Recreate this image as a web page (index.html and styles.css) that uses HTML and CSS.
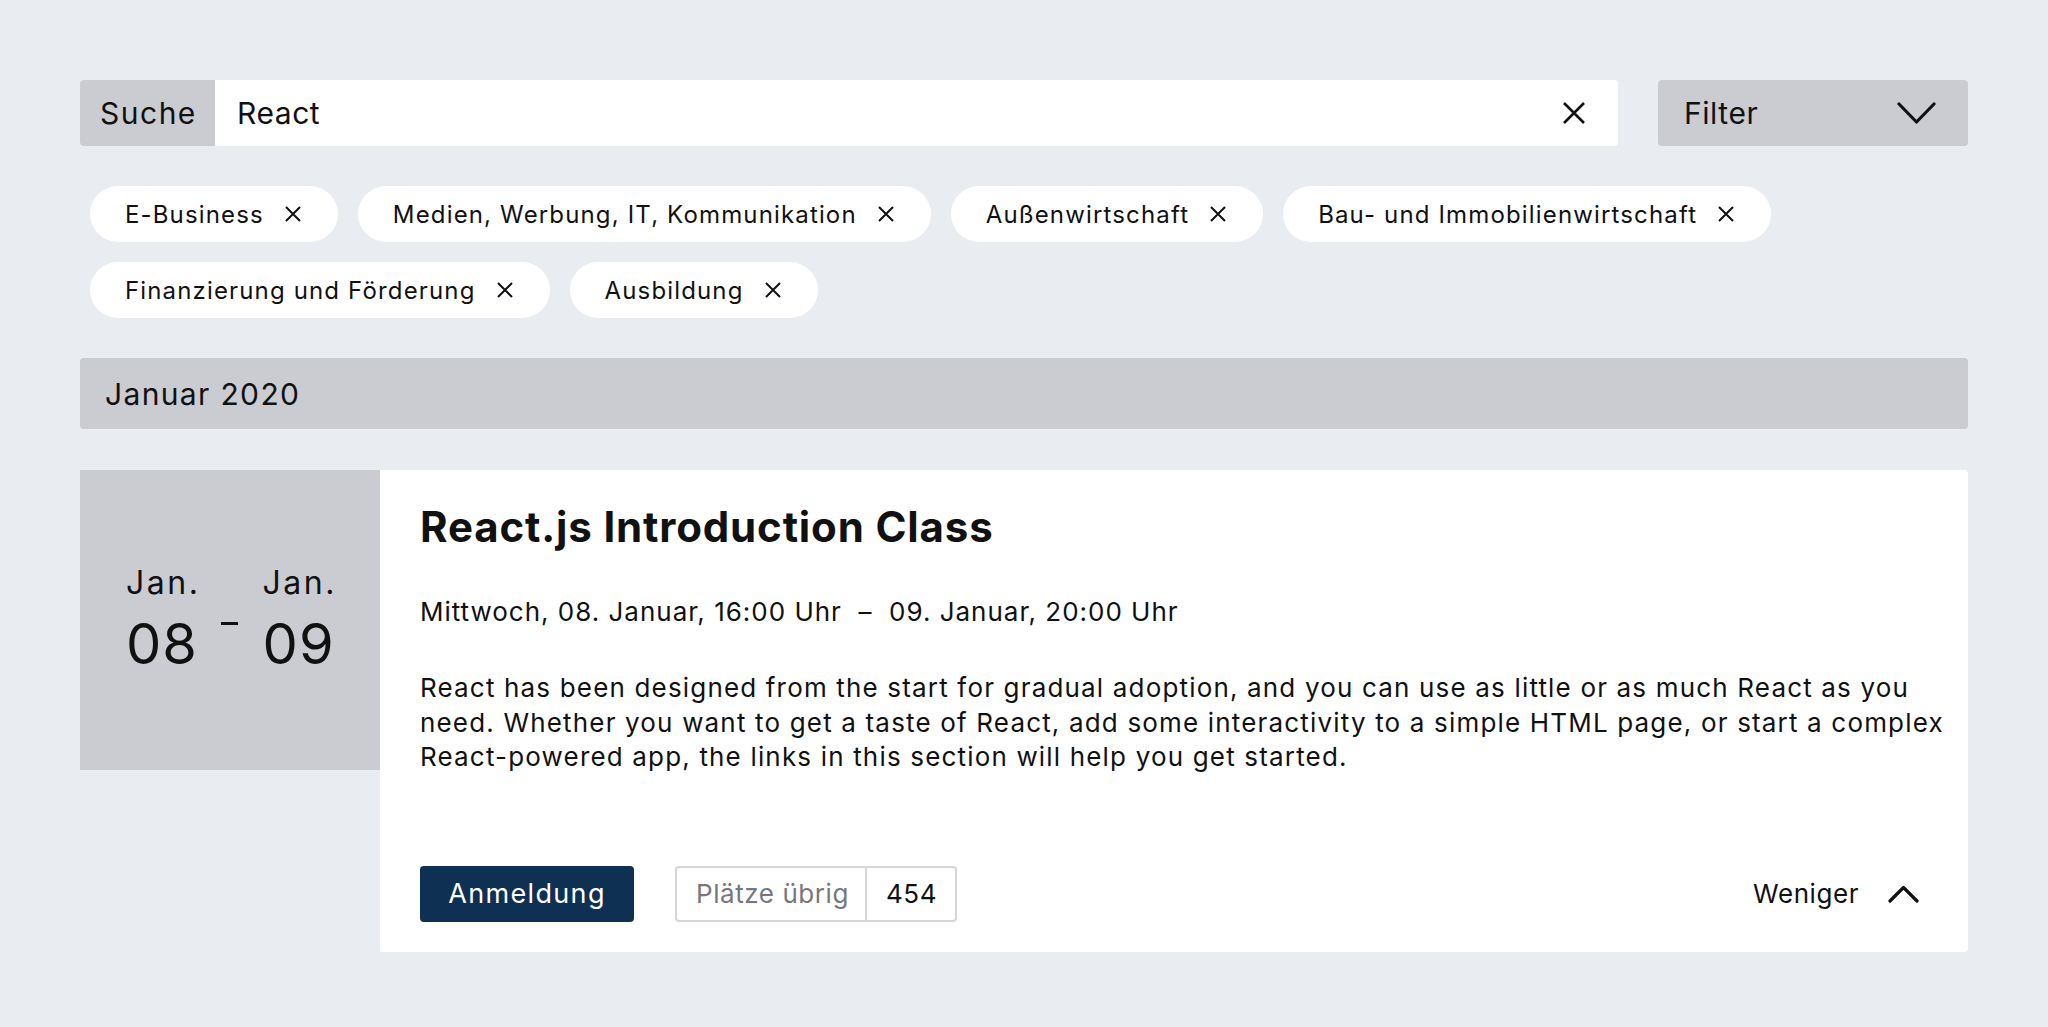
FILE: index.html
```html
<!DOCTYPE html>
<html lang="de">
<head>
<meta charset="utf-8">
<title>Veranstaltungen</title>
<link rel="stylesheet" href="styles.css">
</head>
<body>
<div class="page">
  <div class="search-row">
    <div class="search">
      <div class="search-label">Suche</div>
      <div class="search-input">React</div>
      <svg class="search-clear" width="24" height="24" viewBox="0 0 24 24"><path d="M2 2 L22 22 M22 2 L2 22" stroke="#111" stroke-width="2.6" fill="none"/></svg>
    </div>
    <div class="filter">
      <span>Filter</span>
      <svg width="39" height="23" viewBox="0 0 39 23"><polyline points="2,2 19.5,20 37,2" stroke="#111" stroke-width="3.2" fill="none" stroke-linecap="round" stroke-linejoin="round"/></svg>
    </div>
  </div>

  <div class="chips">
    <div class="chip"><span>E-Business</span><svg class="chip-x" width="20" height="16" viewBox="0 0 20 16"><path d="M3 1 L17 15 M17 1 L3 15" stroke="#111" stroke-width="2" fill="none"/></svg></div>
    <div class="chip"><span>Medien, Werbung, IT, Kommunikation</span><svg class="chip-x" width="20" height="16" viewBox="0 0 20 16"><path d="M3 1 L17 15 M17 1 L3 15" stroke="#111" stroke-width="2" fill="none"/></svg></div>
    <div class="chip"><span>Außenwirtschaft</span><svg class="chip-x" width="20" height="16" viewBox="0 0 20 16"><path d="M3 1 L17 15 M17 1 L3 15" stroke="#111" stroke-width="2" fill="none"/></svg></div>
    <div class="chip"><span>Bau- und Immobilienwirtschaft</span><svg class="chip-x" width="20" height="16" viewBox="0 0 20 16"><path d="M3 1 L17 15 M17 1 L3 15" stroke="#111" stroke-width="2" fill="none"/></svg></div>
    <div class="chip"><span>Finanzierung und Förderung</span><svg class="chip-x" width="20" height="16" viewBox="0 0 20 16"><path d="M3 1 L17 15 M17 1 L3 15" stroke="#111" stroke-width="2" fill="none"/></svg></div>
    <div class="chip"><span>Ausbildung</span><svg class="chip-x" width="20" height="16" viewBox="0 0 20 16"><path d="M3 1 L17 15 M17 1 L3 15" stroke="#111" stroke-width="2" fill="none"/></svg></div>
  </div>

  <div class="month">Januar 2020</div>

  <div class="card">
    <div class="date-panel">
      <div class="date-range">
        <div class="date-col"><span class="date-mon">Jan.</span><span class="date-day">08</span></div>
        <span class="date-dash"></span>
        <div class="date-col"><span class="date-mon">Jan.</span><span class="date-day">09</span></div>
      </div>
    </div>
    <div class="card-body">
      <h2 class="title">React.js Introduction Class</h2>
      <p class="when">Mittwoch, 08. Januar, 16:00 Uhr&nbsp; –&nbsp; 09. Januar, 20:00 Uhr</p>
      <p class="desc">React has been designed from the start for gradual adoption, and you can use as little or as much React as you need. Whether you want to get a taste of React, add some interactivity to a simple HTML page, or start a complex React-powered app, the links in this section will help you get started.</p>
      <div class="actions">
        <button class="btn-primary">Anmeldung</button>
        <div class="places"><span class="places-label">Plätze übrig</span><span class="places-num">454</span></div>
        <div class="less">
          <span>Weniger</span>
          <svg width="31" height="18" viewBox="0 0 31 18"><polyline points="2,16 15.5,2.5 29,16" stroke="#111" stroke-width="3.2" fill="none" stroke-linecap="round" stroke-linejoin="round"/></svg>
        </div>
      </div>
    </div>
  </div>
</div>
</body>
</html>
```

FILE: styles.css
```css
* { box-sizing: border-box; }
html, body { margin: 0; padding: 0; }
body {
  background: #e9ecf1;
  font-family: Inter, "Noto Sans", "Liberation Sans", sans-serif;
  color: #111;
  letter-spacing: 0.035em;
}
.page { padding: 80px 80px 60px; }

.search-row { display: flex; gap: 40px; height: 66px; }
.search {
  flex: 1;
  display: flex;
  align-items: center;
  background: #fff;
  border-radius: 4px;
  overflow: hidden;
}
.search-label {
  width: 135px;
  height: 100%;
  display: flex;
  align-items: center;
  padding-left: 20px;
  background: #cbccd1;
  font-size: 30px;
  letter-spacing: 0.05em;
}
.search-input { flex: 1; padding-left: 22px; font-size: 30px; }
.search-clear { margin-right: 32px; }
.filter {
  width: 310px;
  display: flex;
  align-items: center;
  justify-content: space-between;
  padding: 0 32px 0 26px;
  background: #cbccd1;
  border-radius: 4px;
  font-size: 30px;
}

.chips {
  display: flex;
  flex-wrap: wrap;
  gap: 20px;
  margin-top: 40px;
  padding: 0 10px;
}
.chip {
  height: 56px;
  display: flex;
  align-items: center;
  gap: 19px;
  padding: 0 35px;
  background: #fff;
  border-radius: 28px;
  font-size: 24px;
  letter-spacing: 1.15px;
}

.month {
  margin-top: 40px;
  height: 71px;
  display: flex;
  align-items: center;
  padding-left: 25px;
  background: #cbccd1;
  border-radius: 4px;
  font-size: 30px;
  letter-spacing: 0.045em;
}

.card { display: flex; margin-top: 41px; }
.date-panel {
  width: 300px;
  height: 300px;
  flex: none;
  display: flex;
  align-items: center;
  justify-content: center;
  background: #cbccd1;
}
.date-range { display: flex; align-items: flex-start; margin-top: -6px; margin-left: 3px; }
.date-col { display: flex; flex-direction: column; }
.date-mon { font-size: 32px; line-height: 40px; letter-spacing: 0.08em; }
.date-day { font-size: 56px; line-height: 56px; margin-top: 13px; letter-spacing: 0.02em; }
.date-dash {
  width: 17px;
  height: 3px;
  background: #111;
  margin: 59px 25px 0 20px;
}

.card-body {
  flex: 1;
  background: #fff;
  padding: 32px 20px 30px 40px;
  border-radius: 0 4px 4px 0;
}
.title { margin: 0; font-size: 42px; line-height: 50px; font-weight: 700; letter-spacing: 0.02em; }
.when { margin: 42px 0 0; font-size: 26px; line-height: 36px; letter-spacing: 0.038em; }
.desc { margin: 41px 0 0; font-size: 26px; line-height: 34.5px; letter-spacing: 0.045em; }

.actions { display: flex; align-items: center; margin-top: 91px; height: 56px; }
.btn-primary {
  width: 214px;
  height: 56px;
  border: 0;
  border-radius: 4px;
  background: #0e3052;
  color: #fff;
  font-family: inherit;
  font-size: 27px;
  letter-spacing: 0.05em;
}
.places {
  margin-left: 41px;
  height: 56px;
  display: flex;
  border: 2px solid #d6d6da;
  border-radius: 4px;
  font-size: 26px;
}
.places-label {
  width: 190px;
  display: flex;
  align-items: center;
  padding-left: 19px;
  color: #77777d;
  border-right: 2px solid #d6d6da;
}
.places-num { width: 88px; display: flex; align-items: center; padding-left: 19px; }
.less {
  margin-left: auto;
  margin-right: 29px;
  display: flex;
  align-items: center;
  gap: 29px;
  font-size: 26px;
}
```
